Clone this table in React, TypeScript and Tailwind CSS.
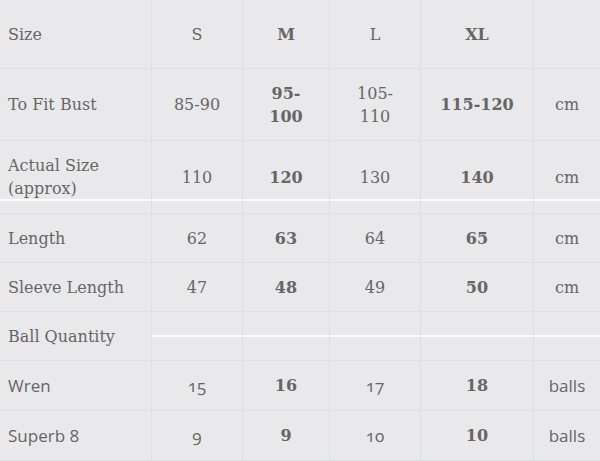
import React from "react";

type Cell = { text: React.ReactNode; bold?: boolean; sans?: boolean };
type Row = { label: React.ReactNode; labelSans?: boolean; cells: Cell[]; h: string; stripe?: "full" | "values" };

const serif = "font-['DejaVu_Serif',serif]";
const sans = "font-['Open_Sans',sans-serif] oldstyle-nums";

const rows: Row[] = [
  {
    label: "Size",
    h: "h-[69px]",
    cells: [{ text: "S" }, { text: "M", bold: true }, { text: "L" }, { text: "XL", bold: true }, { text: "" }],
  },
  {
    label: "To Fit Bust",
    h: "h-[72px]",
    cells: [
      { text: "85-90" },
      { text: <>95-<br />100</>, bold: true },
      { text: <>105-<br />110</> },
      { text: "115-120", bold: true },
      { text: "cm" },
    ],
  },
  {
    label: <>Actual Size<br />(approx)</>,
    h: "h-[73px]",
    stripe: "full",
    cells: [{ text: "110" }, { text: "120", bold: true }, { text: "130" }, { text: "140", bold: true }, { text: "cm" }],
  },
  {
    label: "Length",
    h: "h-[49px]",
    cells: [{ text: "62" }, { text: "63", bold: true }, { text: "64" }, { text: "65", bold: true }, { text: "cm" }],
  },
  {
    label: "Sleeve Length",
    h: "h-[49px]",
    cells: [{ text: "47" }, { text: "48", bold: true }, { text: "49" }, { text: "50", bold: true }, { text: "cm" }],
  },
  {
    label: "Ball Quantity",
    h: "h-[49px]",
    stripe: "values",
    cells: [{ text: "" }, { text: "" }, { text: "" }, { text: "" }, { text: "" }],
  },
  {
    label: "Wren",
    labelSans: true,
    h: "h-[50px]",
    cells: [
      { text: "15", sans: true },
      { text: "16", bold: true },
      { text: "17", sans: true },
      { text: "18", bold: true },
      { text: "balls", sans: true },
    ],
  },
  {
    label: "Superb 8",
    labelSans: true,
    h: "h-[50px]",
    cells: [
      { text: "9", sans: true },
      { text: "9", bold: true },
      { text: "10", sans: true },
      { text: "10", bold: true },
      { text: "balls", sans: true },
    ],
  },
];

const App = () => {
  return (
    <div className="w-[600px] h-[461px] bg-[#e9e9eb] text-[#666] overflow-hidden">
      {rows.map((row, i) => (
        <div
          key={i}
          className={
            "grid grid-cols-[152px_91px_87px_91px_113px_1fr] border-b border-[#dedfe0] " +
            row.h +
            (row.stripe === "full"
              ? " bg-[linear-gradient(to_bottom,transparent_58px,#fdfdfd_58px,#fdfdfd_60px,transparent_60px)]"
              : "")
          }
        >
          <div
            className={
              "flex items-center pl-2 border-r border-[#dedfe0] leading-[23px] " +
              (row.labelSans ? "font-['Open_Sans',sans-serif] text-[17px]" : serif + " text-[16px]")
            }
          >
            <span>{row.label}</span>
          </div>
          {row.cells.map((c, j) => (
            <div
              key={j}
              className={
                "flex items-center justify-center text-center leading-[23px] " +
                (j < 4 ? "border-r border-[#dedfe0] " : "") +
                (c.sans ? sans + " text-[17px] " : serif + " text-[16px] ") +
                (c.bold ? "font-bold " : "") +
                (row.stripe === "values"
                  ? "bg-[linear-gradient(to_bottom,transparent_23px,#fdfdfd_23px,#fdfdfd_25px,transparent_25px)]"
                  : "")
              }
            >
              <span>{c.text}</span>
            </div>
          ))}
        </div>
      ))}
    </div>
  );
};

export default App;
